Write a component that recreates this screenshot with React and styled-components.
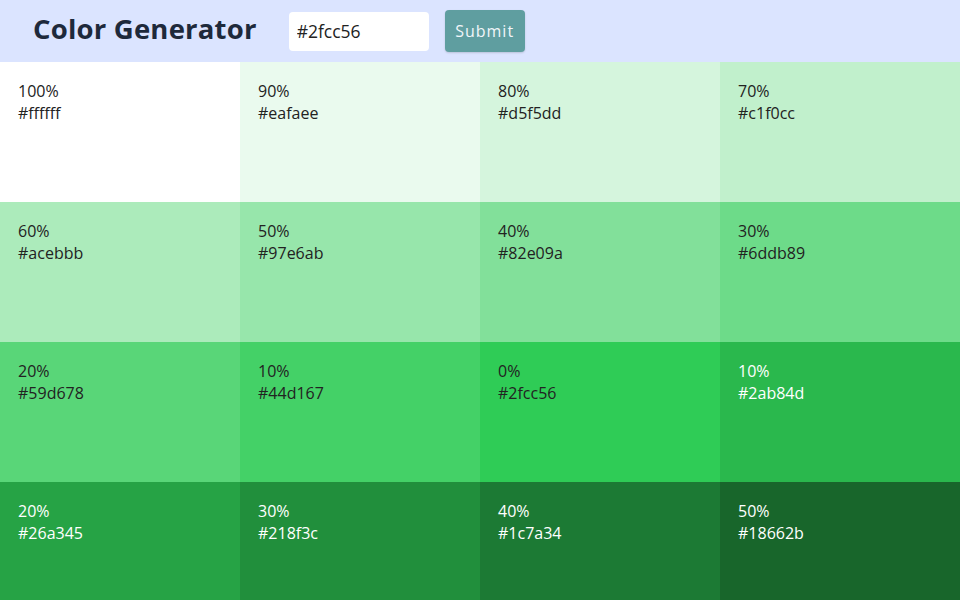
import React from "react";
import styled, { createGlobalStyle } from "styled-components";

const Global = createGlobalStyle`
  * { box-sizing: border-box; }
  body { margin: 0; font-family: "Open Sans", "Noto Sans", sans-serif; }
`;

const Header = styled.header`
  height: 62px;
  background: #dbe4ff;
  display: flex;
  align-items: center;
  padding-left: 33px;
`;

const Title = styled.h1`
  margin: 0 32px 5px 0;
  font-size: 27.5px;
  font-weight: 700;
  color: #1e293b;
  letter-spacing: 0.2px;
`;

const Form = styled.form`
  display: flex;
  align-items: center;
  gap: 16px;
`;

const Input = styled.input`
  width: 140px;
  height: 39px;
  border: none;
  border-radius: 4px;
  background: #fff;
  padding: 0 8px;
  font-family: inherit;
  font-size: 17.5px;
  color: #222;
  outline: none;
`;

const Button = styled.button`
  width: 80px;
  height: 42px;
  border: none;
  border-radius: 4px;
  background: #5f9ea0;
  color: #f1f5f9;
  font-family: inherit;
  font-size: 16px;
  letter-spacing: 1px;
  box-shadow: 0 1px 2px rgba(0,0,0,0.15);
`;

const Grid = styled.section`
  display: grid;
  grid-template-columns: repeat(4, 1fr);
  grid-auto-rows: 140px;
`;

const Tile = styled.article`
  background: ${(p) => p.$bg};
  color: ${(p) => (p.$dark ? "#fff" : "#222")};
  padding: 18px 18px;
  font-size: 16px;
  line-height: 22px;
`;

const Line = styled.p`
  margin: 0;
`;

const colors = [
  ["100%", "#ffffff"], ["90%", "#eafaee"], ["80%", "#d5f5dd"], ["70%", "#c1f0cc"],
  ["60%", "#acebbb"], ["50%", "#97e6ab"], ["40%", "#82e09a"], ["30%", "#6ddb89"],
  ["20%", "#59d678"], ["10%", "#44d167"], ["0%", "#2fcc56"], ["10%", "#2ab84d"],
  ["20%", "#26a345"], ["30%", "#218f3c"], ["40%", "#1c7a34"], ["50%", "#18662b"],
];

export default function App() {
  return (
    <>
      <Global />
      <Header>
        <Title>Color Generator</Title>
        <Form onSubmit={(e) => e.preventDefault()}>
          <Input defaultValue="#2fcc56" />
          <Button type="submit">Submit</Button>
        </Form>
      </Header>
      <Grid>
        {colors.map(([w, hex], i) => (
          <Tile key={i} $bg={hex} $dark={i > 10}>
            <Line>{w}</Line>
            <Line>{hex}</Line>
          </Tile>
        ))}
      </Grid>
    </>
  );
}
